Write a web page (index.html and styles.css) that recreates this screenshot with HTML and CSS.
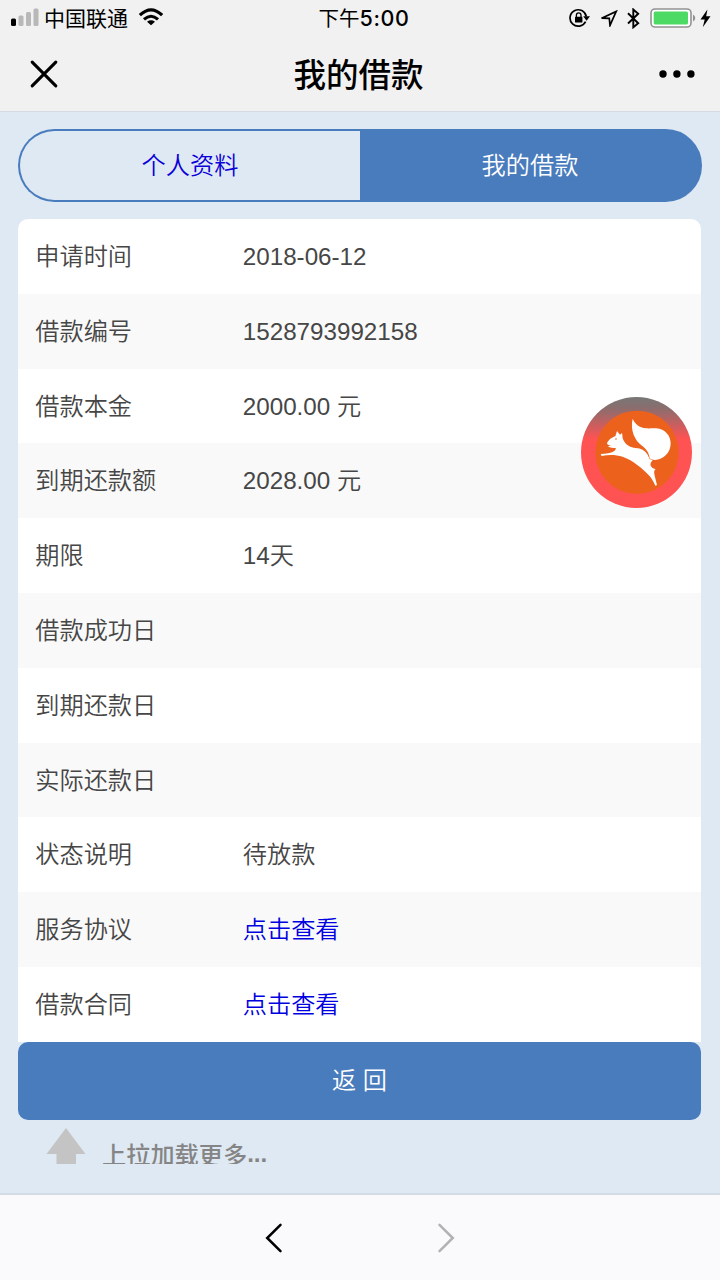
FILE: index.html
```html
<!DOCTYPE html>
<html lang="zh-CN">
<head>
<meta charset="utf-8">
<title>我的借款</title>
<link rel="stylesheet" href="styles.css">
</head>
<body>
<div class="screen">
  <header class="topbar">
    <div class="status">
      <div class="status-left">
        <svg class="signal" width="30" height="18" viewBox="0 0 30 18"><rect x="1" y="10.5" width="5" height="7.5" rx="1.5"/><g fill="#b8b8b8"><rect x="8.5" y="7.5" width="5" height="10.5" rx="1.5"/><rect x="16" y="4" width="5" height="14" rx="1.5"/><rect x="23.5" y="0.5" width="5" height="17.5" rx="1.5"/></g></svg>
        <span class="carrier">中国联通</span>
        <svg class="wifi" width="24" height="18" viewBox="0 0 24 18"><g fill="none" stroke="#000" stroke-width="3.1"><path d="M.9 7.1Q12-3.4 23.1 7.1"/><path d="M5 11.4Q12 5.1 19 11.4"/></g><path d="M8 13.7Q12 10.9 16 13.7L12 17.3Z"/></svg>
      </div>
      <span class="clock">下午<span class="digits">5:00</span></span>
      <div class="status-right">
        <svg class="lock" width="22" height="20" viewBox="0 0 22 20"><path d="M16.6 13.6A8.2 8.2 0 1 1 17.3 8.5" fill="none" stroke="#000" stroke-width="1.7"/><path d="M14.2 8.2H21L17.6 12.7Z"/><rect x="6" y="8.8" width="7.4" height="5.7" rx=".6"/><path d="M7.4 9V7.1a2.3 2.3 0 0 1 4.6 0V9" fill="none" stroke="#000" stroke-width="1.3"/></svg>
        <svg class="arrow" width="18" height="17" viewBox="0 0 18 17"><path d="M1.6 8.2L16.2 1.4L10 15.4L9.3 8.3Z" fill="none" stroke="#000" stroke-width="1.7"/></svg>
        <svg class="bluetooth" width="13" height="21" viewBox="0 0 13 21"><path d="M1 5.3L11.2 15.2L6.3 19.3V1.5L11.2 5.7L1 15.5" fill="none" stroke="#000" stroke-width="1.9"/></svg>
        <svg class="battery" width="46" height="20" viewBox="0 0 46 20"><rect x="1" y="1" width="40" height="18" rx="4" fill="#fff" stroke="#929292" stroke-width="1.6"/><rect x="3.7" y="3.4" width="34.3" height="13.2" rx="1.7" fill="#4cd964"/><path d="M43 6.5Q45.3 7.5 45.3 10T43 13.5Z" fill="#929292"/></svg>
        <svg class="bolt" width="11" height="19" viewBox="0 0 11 19"><path d="M7.4 .5L.5 10.6H4.7L2.8 18.3L10.5 7.3H6.2Z"/></svg>
      </div>
    </div>
    <div class="titlebar">
      <svg class="close" width="28" height="28" viewBox="0 0 28 28"><path d="M2.2 2.2L25.8 25.8M25.8 2.2L2.2 25.8" fill="none" stroke="#000" stroke-width="3.1" stroke-linecap="round"/></svg>
      <h1 class="title">我的借款</h1>
      <svg class="more" width="36" height="8" viewBox="0 0 36 8"><circle cx="4" cy="4" r="3.7"/><circle cx="17.9" cy="4" r="3.7"/><circle cx="31.9" cy="4" r="3.7"/></svg>
    </div>
  </header>

  <main class="content">
    <nav class="tabs">
      <a class="tab">个人资料</a>
      <a class="tab active">我的借款</a>
    </nav>
    <dl class="details">
      <div class="row"><dt>申请时间</dt><dd>2018-06-12</dd></div>
      <div class="row"><dt>借款编号</dt><dd>1528793992158</dd></div>
      <div class="row"><dt>借款本金</dt><dd>2000.00 元</dd></div>
      <div class="row"><dt>到期还款额</dt><dd>2028.00 元</dd></div>
      <div class="row"><dt>期限</dt><dd>14天</dd></div>
      <div class="row"><dt>借款成功日</dt><dd></dd></div>
      <div class="row"><dt>到期还款日</dt><dd></dd></div>
      <div class="row"><dt>实际还款日</dt><dd></dd></div>
      <div class="row"><dt>状态说明</dt><dd>待放款</dd></div>
      <div class="row"><dt>服务协议</dt><dd><a class="link">点击查看</a></dd></div>
      <div class="row"><dt>借款合同</dt><dd><a class="link">点击查看</a></dd></div>
    </dl>
    <div class="back">返 回</div>
    <div class="pullup">
      <svg class="up" width="40" height="36" viewBox="0 0 40 36"><path d="M20 0L39.5 26H30V36H10.5V26H.5Z" fill="#c4c4c4"/></svg>
      <span class="pullup-text">上拉加载更多<b>...</b></span>
    </div>
  </main>

  <footer class="browser-nav">
    <svg width="18" height="30" viewBox="0 0 18 30"><path d="M15.5 1.8L2.2 15L15.5 28.2" fill="none" stroke="#000" stroke-width="2.5" stroke-linecap="round"/></svg>
    <svg width="18" height="30" viewBox="0 0 18 30"><path d="M2.5 1.8L15.8 15L2.5 28.2" fill="none" stroke="#b2b2b4" stroke-width="2.5" stroke-linecap="round"/></svg>
  </footer>

  <svg class="float-badge" width="111" height="111" viewBox="33 35 333 333">
    <defs><linearGradient id="ring" x1="0" y1="0" x2="0" y2="1"><stop offset="0" stop-color="#777"/><stop offset=".1" stop-color="#8b6d6d"/><stop offset=".38" stop-color="#ff5252"/><stop offset="1" stop-color="#ff5252"/></linearGradient></defs>
    <circle cx="199.500" cy="201.500" r="166.500" fill="url(#ring)"/>
    <circle cx="201" cy="201" r="125" fill="#ec621d"/>
    <path fill="#fff" d="M188 100C194 115 208 127 228 129C240 130 247 128 259 129C285 131 302 151 302 174C302 204 280 222 255 224C248 224 243 222 239 219C238 205 230 191 216 181C194 165 180 134 188 100Z"/>
    <path fill="#fff" d="M141 137L150 148L156 143C158 150 156 156 160 164C168 180 182 187 197 188C213 189 225 195 232 207C235 212 236 217 239 221L248 225C243 230 240 235 242 241C245 247 250 250 257 251C251 256 252 262 254 271L261 299L256 301C250 287 244 277 235 268C216 249 191 226 158 214C138 208 114 208 95 212L92 206C107 206 123 204 132 198C136 195 138 191 137 188C130 188 119 188 114 183L123 180C116 180 111 178 111 174C114 166 124 156 136 153Z"/>
    <circle cx="138" cy="161" r="2.500" fill="#ec621d"/>
  </svg>
</div>
</body>
</html>
```
FILE: styles.css
```css
* { box-sizing: border-box; }
body { margin: 0; font-family: "Liberation Sans", "Noto Sans CJK SC", sans-serif; }
svg { display: block; flex: none; }
.screen { position: relative; display: flex; flex-direction: column; width: 720px; height: 1280px; overflow: hidden; background: #dfe9f3; }

.topbar { height: 112px; flex: none; background: #f1f1f1; border-bottom: 1px solid #d3dae1; }
.status { display: grid; grid-template-columns: 270px 1fr 270px; align-items: center; height: 36px; padding: 0 9px 0 10px; }
.status-left { display: flex; align-items: center; margin-top: -2px; }
.carrier { margin-left: 4px; font: 21px/34px "Noto Sans CJK SC", sans-serif; }
.wifi { margin-left: 11px; }
.clock { margin-top: -1px; font: 20.500px/34px "Noto Sans CJK SC", sans-serif; text-align: center; padding-left: 7px; white-space: nowrap; }
.digits { font: 500 21.500px/34px Inter, sans-serif; letter-spacing: 0.600px; }
.status-right { display: flex; align-items: center; justify-content: flex-end; }
.arrow { margin-left: 9px; }
.bluetooth { margin-left: 9px; }
.battery { margin-left: 10px; }
.bolt { margin-left: 4px; }
.titlebar { display: flex; align-items: center; justify-content: space-between; height: 75px; padding: 0 25px 0 30px; }
.title { margin: -2px 0 0; font: 500 32.500px/48px "Noto Sans CJK SC", sans-serif; }

.content { flex: 1; padding: 17px 18px 0; color: #464646; font-size: 24.200px; font-weight: 350; }
.tabs { display: grid; grid-template-columns: 342px 342px; grid-template-rows: 73px; }
.tab { border: 2px solid #497cbd; line-height: 70px; text-align: center; color: #0a00d8; }
.tab:first-child { border-right: 0; border-radius: 37px 0 0 37px; }
.tab.active { padding-right: 2px; border-radius: 0 37px 37px 0; background: #497cbd; color: #fff; }
.details { margin: 17px 1px 0 0; background: #fff; border-radius: 10px 10px 0 0; overflow: hidden; }
.row { display: grid; grid-template-columns: 207.500px 1fr; height: 74.800px; padding-left: 17.300px; line-height: 75.500px; }
.row:nth-child(even) { background: #f9f9f9; }
dt, dd { margin: 0; }
.link { color: #0000e0; }
.back { margin-right: 1px; height: 78px; border-radius: 10px; background: #497cbd; color: #fff; line-height: 77px; text-align: center; }
.pullup { display: flex; height: 44px; padding: 8px 0 0 28px; overflow: hidden; }
.pullup-text { margin-left: 16px; padding-top: 10px; font-weight: 500; line-height: 36px; color: #858585; white-space: nowrap; }
.pullup-text b { position: relative; top: -2px; }

.browser-nav { display: flex; align-items: center; justify-content: center; gap: 154px; height: 87px; flex: none; border-top: 2px solid #d3dbe4; background: #fafafc; }
.float-badge { position: absolute; left: 581px; top: 397px; }
```
